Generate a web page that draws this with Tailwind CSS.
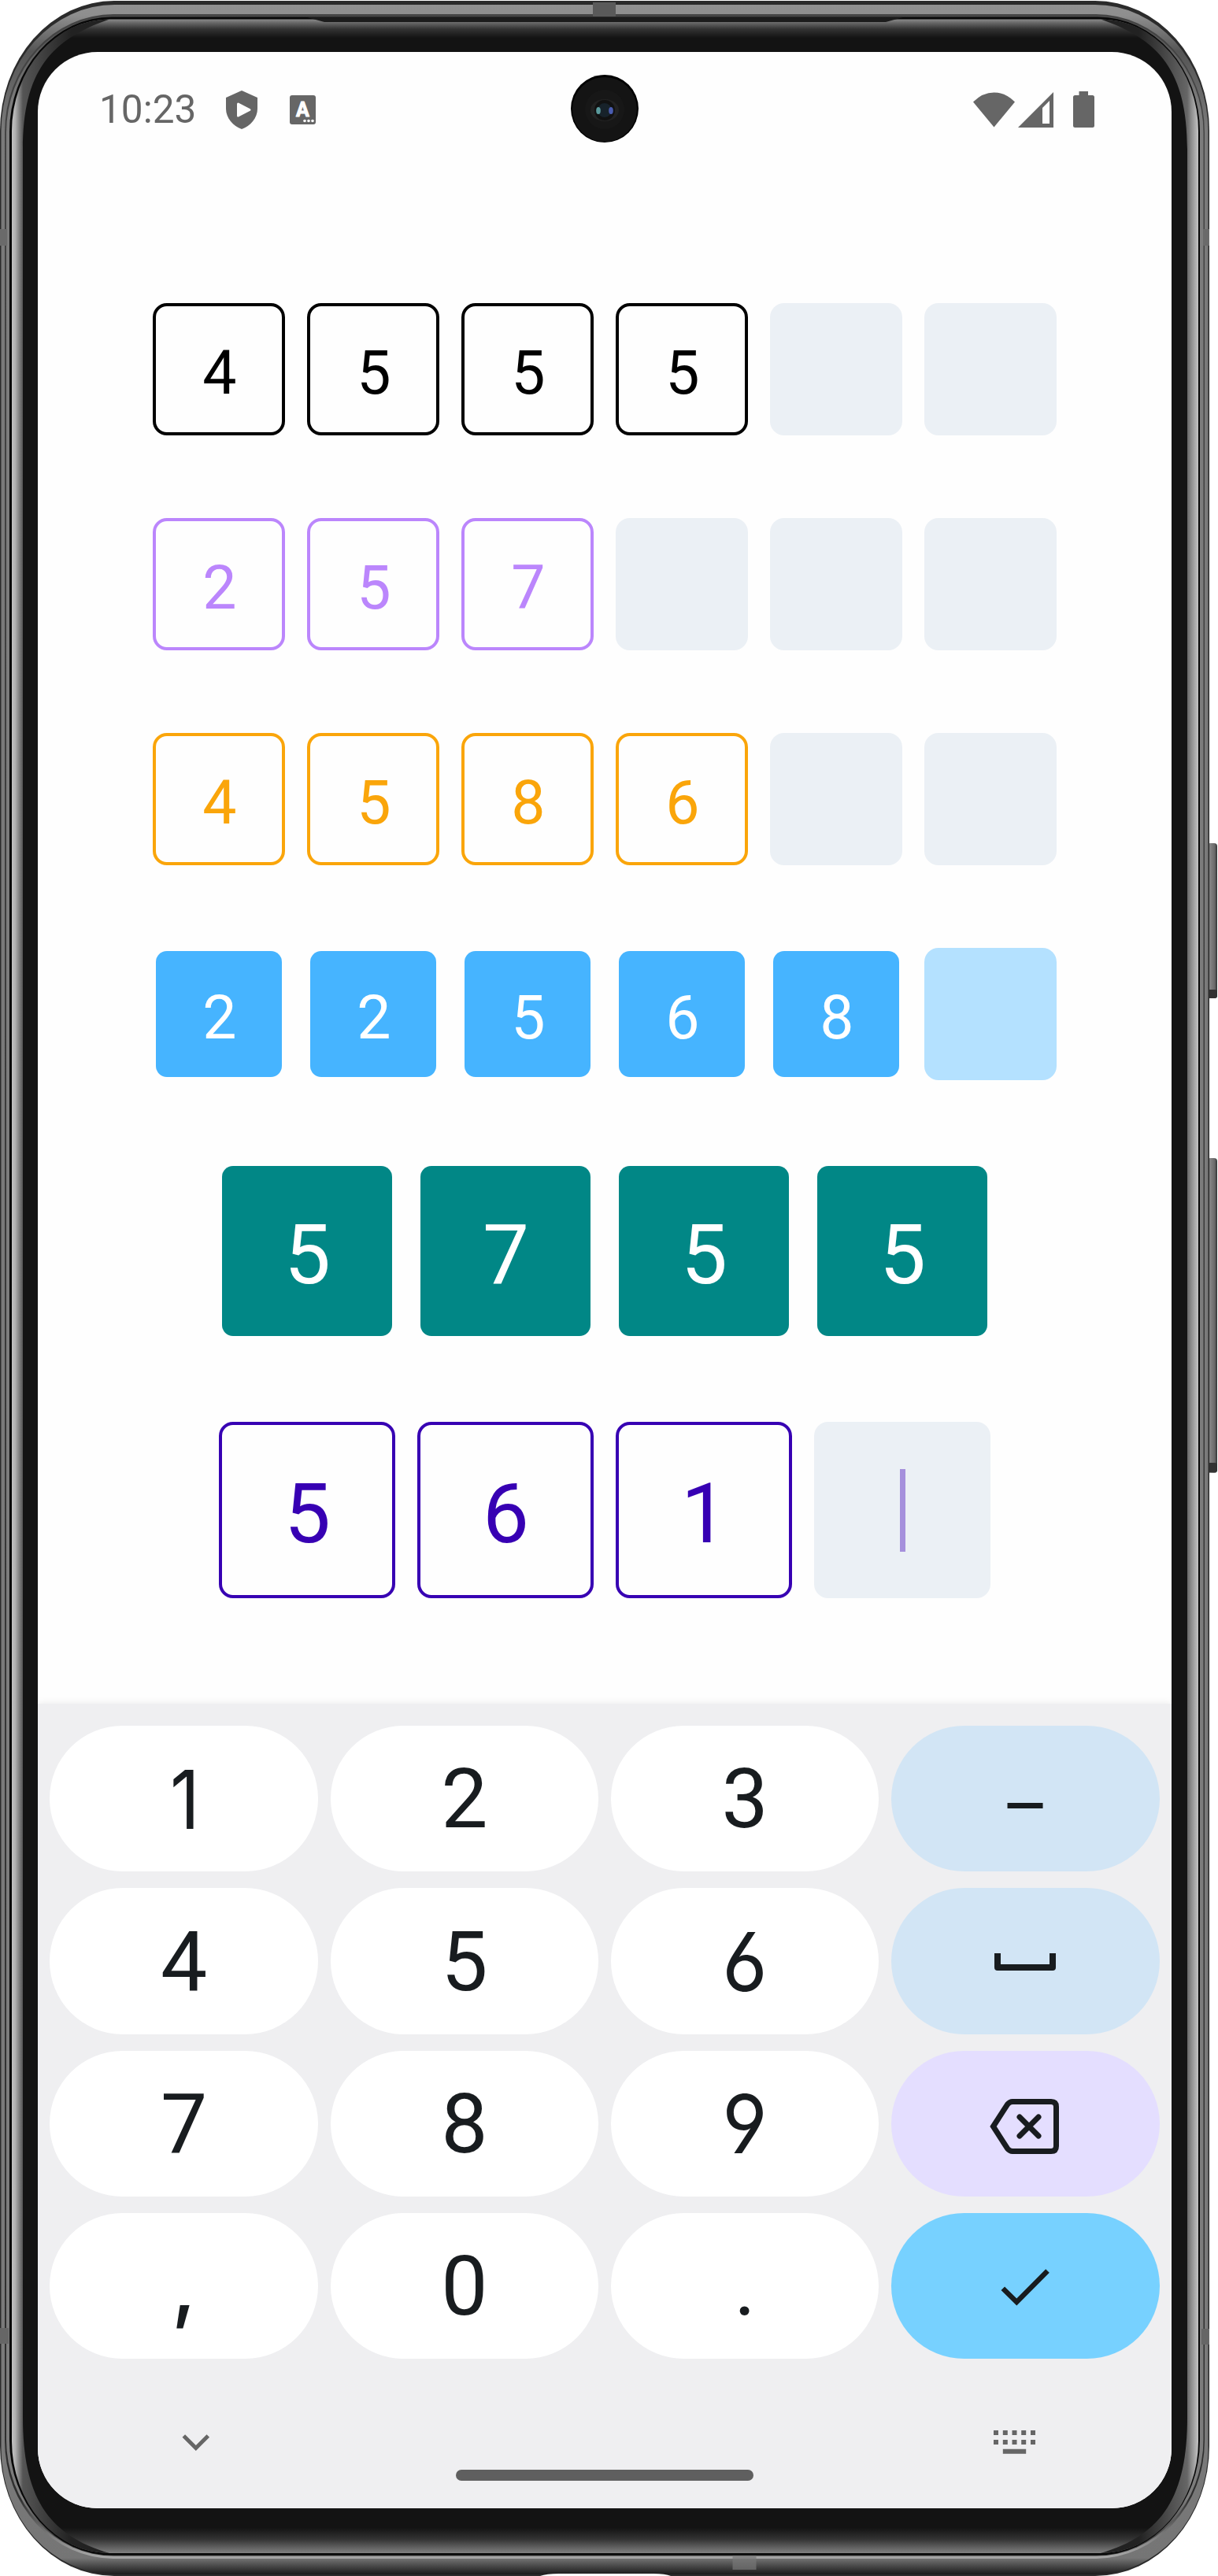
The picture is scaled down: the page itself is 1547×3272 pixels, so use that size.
<!DOCTYPE html>
<html lang="en">
<head>
<meta charset="utf-8">
<title>OTP input demo</title>
<script src="https://cdn.jsdelivr.net/npm/@tailwindcss/browser@4"></script>
</head>
<body class="relative h-[3272px] w-[1547px] overflow-hidden bg-white font-[Roboto,sans-serif]">

<!-- phone body -->
<svg class="absolute inset-0" width="1547" height="3272" viewBox="0 0 1547 3272" aria-hidden="true">
  <defs>
    <linearGradient id="btn" x1="0" x2="1"><stop offset="0" stop-color="#444"/><stop offset=".3" stop-color="#858585"/><stop offset=".75" stop-color="#6a6a6a"/><stop offset="1" stop-color="#333"/></linearGradient>
    <linearGradient id="shell" gradientUnits="userSpaceOnUse" x1="0" y1="0" x2="0" y2="3272">
      <stop offset="0" stop-color="#929292"/><stop offset=".006" stop-color="#8e8e8e"/><stop offset=".02" stop-color="#555"/><stop offset=".05" stop-color="#7a7a7a"/><stop offset=".95" stop-color="#7a7a7a"/><stop offset=".993" stop-color="#757575"/><stop offset=".9993" stop-color="#1c1c1c"/></linearGradient>
    <linearGradient id="lip" gradientUnits="userSpaceOnUse" x1="0" y1="0" x2="0" y2="3272">
      <stop offset="0" stop-color="#444"/><stop offset=".97" stop-color="#2e2e2e"/><stop offset=".992" stop-color="#a4a4a4"/></linearGradient>
    <linearGradient id="lip2" gradientUnits="userSpaceOnUse" x1="0" y1="0" x2="0" y2="3272">
      <stop offset="0" stop-color="#444"/><stop offset=".04" stop-color="#7c7c7c"/><stop offset=".97" stop-color="#7c7c7c"/><stop offset=".99" stop-color="#333"/></linearGradient>
    <linearGradient id="glow" gradientUnits="userSpaceOnUse" x1="0" y1="24" x2="0" y2="3243">
      <stop offset="0" stop-color="#8e8e8e"/><stop offset=".0016" stop-color="#666"/><stop offset=".004" stop-color="#333"/><stop offset=".0075" stop-color="#131313"/><stop offset=".99" stop-color="#131313"/><stop offset=".9945" stop-color="#333"/><stop offset="1" stop-color="#808080"/></linearGradient>
    <linearGradient id="side" gradientUnits="userSpaceOnUse" x1="15" y1="0" x2="1522" y2="0">
      <stop offset="0" stop-color="#c4c4c4"/><stop offset=".003" stop-color="#b0b0b0"/><stop offset=".0093" stop-color="#555"/><stop offset=".05" stop-color="#222"/><stop offset=".95" stop-color="#222"/><stop offset=".9907" stop-color="#666"/><stop offset=".994" stop-color="#8c8c8c"/><stop offset="1" stop-color="#c4c4c4"/></linearGradient>
  </defs>
  <rect x="1533" y="1071" width="13" height="197" rx="4" fill="url(#btn)"/>
  <rect x="1533" y="1257" width="13" height="11" rx="3" fill="#333"/>
  <rect x="1533" y="1471" width="13" height="400" rx="4" fill="url(#btn)"/>
  <rect x="1533" y="1858" width="13" height="12" rx="3" fill="#333"/>
  <rect x="0" y="1" width="1536" height="3271" rx="145" ry="165" fill="#2b2b2b"/>
  <rect x="1.500" y="6" width="1533" height="3264" rx="144" ry="160" fill="url(#shell)"/>
  <rect x="6" y="18" width="1524" height="3232" rx="138" ry="150" fill="url(#lip)"/>
  <rect x="8" y="20.500" width="1520.500" height="3226" rx="136" ry="148" fill="url(#lip2)"/>
  <rect x="12" y="21.500" width="1512" height="3224" rx="130" ry="146" fill="#080808"/>
  <rect x="15" y="24.500" width="1507" height="3218.500" rx="124" ry="142" fill="url(#glow)"/>
  <path fill="url(#side)" fill-rule="evenodd" d="M139 24.500A124 142 0 0 0 15 166.500V3101A124 142 0 0 0 139 3243C60 3220 29 3170 29 3070V190C29 90 65 50 139 24.500ZM1398 24.500A124 142 0 0 1 1522 166.500V3101A124 142 0 0 1 1398 3243C1477 3220 1508 3170 1508 3070V190C1508 90 1472 50 1398 24.500Z"/>
  <path d="M390 22L412 28H1125L1147 22Z" fill="#1c1c1c"/>
  <rect x="753" y="3" width="29" height="18" fill="#5a5a5a"/>
  <rect x="930.500" y="3246" width="30" height="18" fill="#777" opacity=".7"/>
  <rect x="0" y="291" width="9" height="21" fill="#6a6a6a"/>
  <rect x="1528" y="291" width="8" height="21" fill="#6a6a6a"/>
  <rect x="0" y="2957" width="11" height="20" fill="#666"/>
  <rect x="1526" y="2958" width="10" height="20" fill="#666"/>
  <path d="M686 3272Q694 3269 710 3269H830Q845 3269 852 3272Z" fill="#fff"/>
</svg>

<div class="relative ml-[48px] mt-[66px] flex h-[3120px] w-[1440px] flex-col overflow-hidden rounded-[76px] bg-[#fefefe]">

  <!-- status bar -->
  <header class="flex h-[146px] shrink-0 items-center pl-[78px] pr-[98px] text-[#666]">
    <span class="w-[122px] whitespace-nowrap pt-[1px] text-[49.500px] leading-none">10:23</span>
    <svg class="ml-[39px]" width="40" height="49" viewBox="0 0 40 49"><path fill="#666" d="M20 0L40 9V23C40 35 31 45 20 49C9 45 0 35 0 23V9Z"/><path fill="#fefefe" stroke="#fefefe" stroke-width="3" stroke-linejoin="round" d="M15.500 17L30 24.500L15.500 32Z"/></svg>
    <svg class="ml-[41px]" width="33" height="37" viewBox="0 0 33 37"><rect width="33" height="37" rx="3" fill="#666"/><text x="16.500" y="26.500" text-anchor="middle" font-size="25" font-weight="700" fill="#fefefe" stroke="#fefefe" stroke-width="1" stroke-linejoin="round" font-family="Roboto">A</text><g fill="#fefefe"><circle cx="19" cy="32.500" r="1.800"/><circle cx="24" cy="32.500" r="1.800"/><circle cx="29" cy="32.500" r="1.800"/></g></svg>
    <svg class="ml-auto" width="53" height="45" viewBox="0 0 53 45" fill="#666"><path d="M0 12.500Q12 .5 26.500 .5T53 12.500L26.500 44.500Z"/></svg>
    <svg class="ml-[4px]" width="45" height="45" viewBox="0 0 45 45" fill="#666"><path fill-rule="evenodd" d="M0 45L45 0V45ZM31 20V40H40V11Z"/></svg>
    <svg class="ml-[25px]" width="27" height="46" viewBox="0 0 27 46" fill="#666"><path d="M7.500 0H19V5H24.500Q27 5 27 7.500V43.500Q27 46 24.500 46H2.500Q0 46 0 43.500V7.500Q0 5 2.500 5H7.500Z"/></svg>
  </header>

  <!-- camera cut-out -->
  <svg class="absolute left-[677px] top-[29px]" width="86" height="86" viewBox="0 0 86 86">
    <circle cx="43" cy="43" r="43" fill="#000"/><circle cx="43" cy="44" r="41" fill="#141414"/>
    <circle cx="43" cy="44" r="25" fill="#171717"/><ellipse cx="43" cy="45" rx="18" ry="14" fill="#222"/><circle cx="43" cy="45" r="13" fill="#111"/><circle cx="43" cy="45" r="9" fill="#17222a"/>
    <ellipse cx="35" cy="45.500" rx="2.800" ry="4.500" fill="#5a9a9c"/><ellipse cx="51" cy="45.500" rx="2.800" ry="4.500" fill="#4a5cb0"/>
  </svg>

  <!-- code fields -->
  <main id="fields" class="flex flex-col items-center gap-[105px] pt-[173px]"></main>

  <!-- keyboard -->
  <section class="absolute inset-x-0 bottom-0 flex h-[1022px] flex-col bg-[#efeff1] pt-[28px] shadow-[0_-1px_9px_rgba(0,0,0,0.07)]">
    <div id="keys" class="grid grid-cols-4 gap-x-[15.500px] gap-y-[21px] px-[15.300px] text-[105.500px] leading-none text-[#181c1f]"></div>
    <div class="flex items-start justify-between pl-[183px] pr-[172px] pt-[91px]">
      <svg class="mt-[5px]" width="36" height="24" viewBox="0 0 36 24" fill="none" stroke="#666" stroke-width="5"><path d="M2.300 2L17.800 17.500L33.300 2"/></svg>
      <svg width="54" height="30" viewBox="0 0 54 30" fill="#666"><path d="M0 0h6v6H0zM11.800 0h6v6h-6zM23.500 0h6v6h-6zM35.200 0h6v6h-6zM47 0h6v6h-6zM0 12h6v6H0zM11.800 12h6v6h-6zM23.500 12h6v6h-6zM35.200 12h6v6h-6zM47 12h6v6h-6zM11.800 23.800h29.400v6H11.800z"/></svg>
    </div>
    <div class="absolute bottom-[35px] left-[531px] h-[14px] w-[378px] rounded-full bg-[#5f5f5f]"></div>
  </section>
</div>

<script>
const small = 'size-[168px] text-[77px] pt-[11px] pl-[2px]', large = 'size-[224px] text-[105px] pt-[11px] pl-[1px]';
const rows = [
  [small, '4555', 6, 'border-4 border-black text-black', 'bg-[#ebf0f5]'],
  [small, '257', 6, 'border-4 border-[#bb86fc] text-[#bb86fc]', 'bg-[#ebf0f5]'],
  [small, '4586', 6, 'border-4 border-[#faa50a] text-[#faa50a]', 'bg-[#ebf0f5]'],
  [small, '22568', 6, 'border-4 border-transparent bg-clip-padding bg-[#46b4ff] text-white', 'bg-[#b4e1ff]'],
  [large, '5755', 4, 'border-4 border-transparent bg-clip-padding bg-[#018786] text-white', ''],
  [large, '561', 4, 'border-4 border-[#3700b3] text-[#3700b3]', 'bg-[#ebf0f5]'],
];
document.getElementById('fields').innerHTML = rows.map(([size, code, n, on, off], r) =>
  '<div class="flex gap-[28px]">' + Array.from({length: n}, (_, i) => {
    const cursor = r === 5 && i === 3 ? '<span class="h-[105px] w-[7px] bg-[#a590dc] -mt-[11px]"></span>' : '';
    return `<div class="flex items-center justify-center rounded-[18px] leading-none ${size} ${i < code.length ? on : off}">${code[i] ?? cursor}</div>`;
  }).join('') + '</div>').join('');

const alt = (t, cls) => `<span class="font-[Inter,sans-serif] text-[103px] [font-feature-settings:'cv03','cv04'] ${cls}">${t}</span>`;
const icons = {
  '1': alt('1', 'scale-x-[0.9] pl-[3px] -mt-[2px]'),
  '6': alt('6', 'scale-x-[0.96] -mt-[2px]'),
  '9': alt('9', 'scale-x-[0.96] -mt-[2px]'),
  ',': alt(',', '-mt-[8px] font-medium'),
  dash: '<span class="pt-[22px] text-[92px]">–</span>',
  space: '<svg class="mt-[3px]" width="78" height="22" viewBox="0 0 78 22" fill="none" stroke="#181c1f" stroke-width="8" stroke-linejoin="round"><path d="M4 0V18H74V0"/></svg>',
  back: '<svg class="mt-[7px] -ml-[3px]" width="90" height="72" viewBox="0 0 90 72" fill="none" stroke="#181c1f" stroke-width="7" stroke-linejoin="round" stroke-linecap="round"><path stroke-linejoin="miter" d="M5.500 36L23.500 8Q26.500 4.500 30 4.500H79Q85.500 4.500 85.500 11V61Q85.500 67.500 79 67.500H30Q26.500 67.500 23.500 64Z"/><path d="M39 24L63 48M63 24L39 48" stroke-width="7"/></svg>',
  done: '<svg class="mt-[3px]" width="62" height="48" viewBox="0 0 62 48" fill="none" stroke="#181c1f" stroke-width="6.500"><path d="M2.800 25.700L20.300 43L59.500 3.500"/></svg>',
};
const keys = ['1','2','3','dash','4','5','6','space','7','8','9','back',',','0','.','done'];
const tint = {dash: 'bg-[#d2e5f5]', space: 'bg-[#d2e5f5]', back: 'bg-[#e4deff]', done: 'bg-[#77d1ff]'};
document.getElementById('keys').innerHTML = keys.map(k =>
  `<button class="flex h-[185.300px] items-center justify-center rounded-full ${tint[k] ?? 'bg-white pt-[3px]'}">${icons[k] ?? k}</button>`).join('');
</script>
</body>
</html>
